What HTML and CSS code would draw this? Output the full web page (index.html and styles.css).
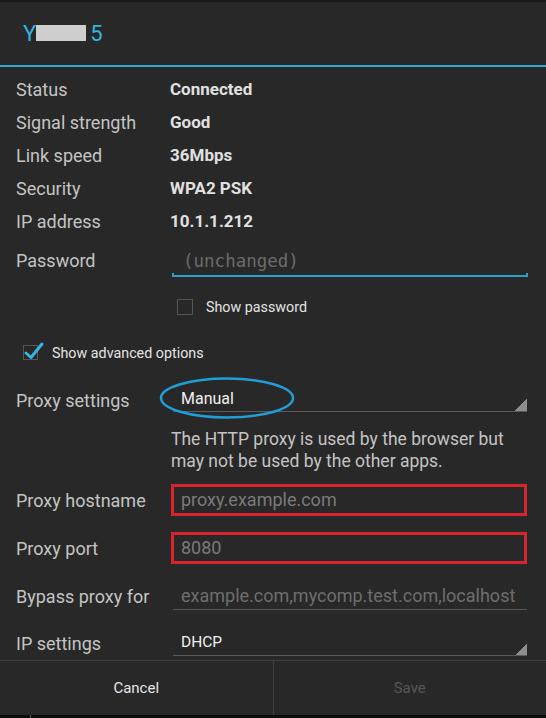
FILE: index.html
```html
<!DOCTYPE html>
<html lang="en">
<head>
    <meta charset="UTF-8">
    <meta name="viewport" content="width=device-width, initial-scale=1.0">
    <title>Wi-Fi network</title>
    <link rel="stylesheet" href="styles.css">
</head>
<body>
    <div class="dialog">
        <header class="dialog-title">
            <h1>Y<span class="redact"></span><span class="tail">5</span></h1>
        </header>
        <div class="dialog-body">
            <div class="info">
                <div class="info-row"><span class="label">Status</span><span class="value">Connected</span></div>
                <div class="info-row"><span class="label">Signal strength</span><span class="value">Good</span></div>
                <div class="info-row"><span class="label">Link speed</span><span class="value">36Mbps</span></div>
                <div class="info-row"><span class="label">Security</span><span class="value">WPA2 PSK</span></div>
                <div class="info-row"><span class="label">IP address</span><span class="value">10.1.1.212</span></div>
            </div>

            <div class="form-row password-row">
                <span class="label">Password</span>
                <div class="edit">
                    <div class="edit-text">(unchanged)</div>
                    <div class="edit-line"></div>
                </div>
            </div>

            <div class="check-row show-password">
                <span class="checkbox"></span>
                <span>Show password</span>
            </div>

            <div class="check-row advanced">
                <svg class="checked" width="22" height="20" viewBox="0 0 22 20">
                    <rect x="0.5" y="4.5" width="14" height="14" fill="none" stroke="#555" stroke-width="1"/>
                    <polyline points="3,12 8,16.5 19,3" fill="none" stroke="#33b5e5" stroke-width="3" stroke-linecap="round" stroke-linejoin="round"/>
                </svg>
                <span>Show advanced options</span>
            </div>

            <div class="form-row proxy-row">
                <span class="label">Proxy settings</span>
                <div class="spinner">
                    Manual
                    <svg class="mark" width="136" height="44" viewBox="0 0 136 44">
                        <ellipse cx="68" cy="22" rx="66" ry="19.5" fill="none" stroke="#1f9ed8" stroke-width="2.5"/>
                    </svg>
                </div>
            </div>

            <p class="hint">The HTTP proxy is used by the browser but<br>may not be used by the other apps.</p>

            <div class="form-row boxed-row">
                <span class="label">Proxy hostname</span>
                <div class="boxed">proxy.example.com</div>
            </div>

            <div class="form-row boxed-row port-row">
                <span class="label">Proxy port</span>
                <div class="boxed">8080</div>
            </div>

            <div class="form-row bypass-row">
                <span class="label">Bypass proxy for</span>
                <div class="plain-edit">example.com,mycomp.test.com,localhost</div>
            </div>

            <div class="form-row ip-row">
                <span class="label">IP settings</span>
                <div class="spinner">DHCP</div>
            </div>
        </div>
        <div class="buttons">
            <button class="btn">Cancel</button>
            <button class="btn" disabled>Save</button>
        </div>
    </div>
    <div class="under"><span class="tick"></span></div>
</body>
</html>
```

FILE: styles.css
```css
body {
    margin: 0;
    padding: 0;
    background: #0c0c0c;
    font-family: Roboto, "Liberation Sans", sans-serif;
}
.dialog {
    height: 715px;
    box-sizing: border-box;
    background: #282828;
    border-top: 2px solid #1a1a1a;
    display: flex;
    flex-direction: column;
}
.dialog-title {
    height: 65px;
    box-sizing: border-box;
    border-bottom: 2px solid #33a9d8;
    display: flex;
    align-items: center;
    padding-left: 23px;
}
.dialog-title h1 {
    margin: 0;
    font-size: 22px;
    font-weight: 400;
    line-height: 26px;
    color: #33b5e5;
}
.redact {
    display: inline-block;
    width: 50px;
    height: 16px;
    background: #cfcfcf;
}
.tail {
    margin-left: 4px;
}
.dialog-body {
    flex: 1;
    overflow: hidden;
    padding-top: 6px;
}
.label {
    color: #c4c4c4;
    font-size: 18px;
}
.info-row {
    display: grid;
    grid-template-columns: 154px 1fr;
    padding-left: 16px;
    height: 33px;
    line-height: 33px;
}
.value {
    color: #e0e0e0;
    font-size: 17px;
    font-weight: 700;
}
.form-row {
    display: flex;
    padding-left: 16px;
    padding-right: 19px;
}
.form-row .label {
    width: 156px;
    flex-shrink: 0;
}
.password-row {
    margin-top: 11px;
    align-items: flex-start;
}
.password-row .label {
    line-height: 24px;
}
.edit {
    flex: 1;
    margin-right: -1px;
}
.edit-text {
    line-height: 24px;
    padding-left: 11px;
    font-family: "DejaVu Sans Mono", "Liberation Mono", monospace;
    font-size: 17.5px;
    color: #6c6c6c;
}
.edit-line {
    height: 2px;
    border: 2px solid #2f9fcb;
    border-top: none;
}
.check-row {
    display: flex;
    align-items: center;
    font-size: 14.3px;
    color: #e4e4e4;
}
.show-password {
    margin-top: 22px;
    padding-left: 177px;
    height: 16px;
    gap: 13px;
}
.checkbox {
    width: 16px;
    height: 16px;
    box-sizing: border-box;
    border: 1px solid #555;
}
.advanced {
    margin-top: 26px;
    padding-left: 23px;
    height: 20px;
    gap: 7px;
}
.advanced span {
    padding-top: 3px;
}
.proxy-row {
    margin-top: 25px;
    align-items: flex-start;
}
.proxy-row .label {
    line-height: 25px;
    padding-top: 2px;
}
.spinner {
    position: relative;
    flex: 1;
    margin-left: 1px;
    padding-left: 8px;
    line-height: 25px;
    font-size: 16px;
    color: #f0f0f0;
    border-bottom: 1px solid #5a5a5a;
    background-image: linear-gradient(to top left, #8e8e8e 50%, transparent 50%);
    background-size: 12px 12px;
    background-position: right bottom;
    background-repeat: no-repeat;
}
.mark {
    position: absolute;
    left: -14px;
    top: -10px;
}
.hint {
    margin: 15px 0 0 171px;
    font-size: 17.5px;
    line-height: 22px;
    color: #c4c4c4;
}
.boxed-row {
    margin-top: 12px;
    align-items: center;
}
.port-row {
    margin-top: 16px;
}
.boxed {
    flex: 1;
    margin-left: -1px;
    height: 32px;
    box-sizing: border-box;
    border: 3px solid #d8242c;
    padding-left: 7px;
    line-height: 26px;
    font-size: 18px;
    color: #7a7a7a;
}
.bypass-row {
    margin-top: 19px;
    align-items: center;
}
.plain-edit {
    flex: 1;
    margin-left: 1px;
    padding-left: 8px;
    line-height: 26px;
    font-size: 18px;
    color: #6e6e6e;
    border-bottom: 1px solid #555;
}
.ip-row {
    margin-top: 19px;
    align-items: center;
}
.ip-row .spinner {
    line-height: 26px;
    font-size: 15.5px;
}
.ip-row .label {
    padding-top: 1px;
}
.buttons {
    height: 55px;
    box-sizing: border-box;
    border-top: 1px solid #404040;
    display: flex;
}
.btn {
    flex: 1;
    background: none;
    border: none;
    font-family: Roboto, "Liberation Sans", sans-serif;
    font-size: 15px;
    color: #e6e6e6;
    padding: 0;
}
.btn + .btn {
    border-left: 1px solid #404040;
}
.btn:disabled {
    color: #575757;
}
.under {
    height: 3px;
    padding-left: 30px;
}
.tick {
    display: block;
    width: 1px;
    height: 3px;
    background: #5a5a5a;
}
```
